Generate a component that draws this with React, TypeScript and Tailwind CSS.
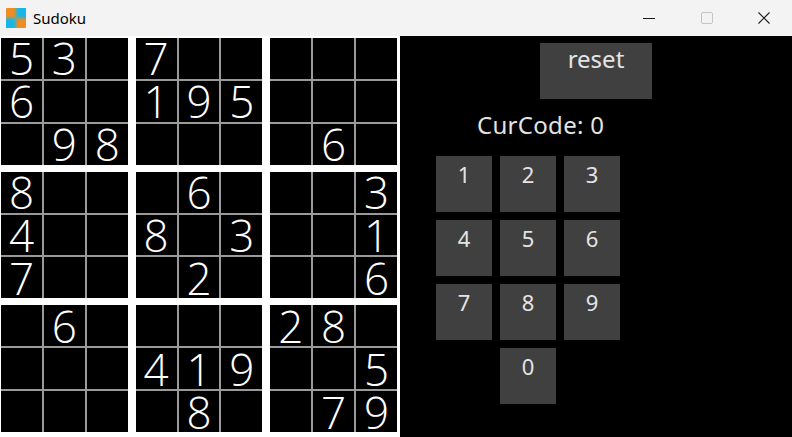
import React from "react";

const puzzle = [
  "53.7.....",
  "6..195...",
  ".98....6.",
  "8...6...3",
  "4..8.3..1",
  "7...2...6",
  ".6....28.",
  "...419..5",
  "....8..79",
];

function AppIcon() {
  return (
    <svg width="20" height="20" viewBox="0 0 20 20">
      <defs>
        <filter id="soft" x="-20%" y="-20%" width="140%" height="140%">
          <feGaussianBlur stdDeviation="1.6" />
        </filter>
        <clipPath id="clip">
          <rect x="0" y="0" width="20" height="20" rx="1" />
        </clipPath>
      </defs>
      <g clipPath="url(#clip)">
        <rect x="0" y="0" width="20" height="20" fill="#ef8d22" />
        <g filter="url(#soft)">
          <rect x="10" y="-4" width="14" height="14" fill="#19b6e8" />
          <rect x="-4" y="10" width="14" height="14" fill="#19b6e8" />
        </g>
      </g>
    </svg>
  );
}

function TitleBar() {
  return (
    <div className="flex h-[36px] items-center bg-[#f3f3f3] text-black">
      <div className="ml-[6px] flex items-center">
        <AppIcon />
      </div>
      <span className="ml-[7px] text-[15px] font-['Segoe_UI','Noto_Sans',sans-serif]">Sudoku</span>
      <div className="ml-auto flex h-full">
        <div className="flex w-[58px] items-center justify-center">
          <svg width="12" height="12" viewBox="0 0 12 12">
            <line x1="0" y1="6.5" x2="12" y2="6.5" stroke="#1a1a1a" strokeWidth="1" />
          </svg>
        </div>
        <div className="flex w-[58px] items-center justify-center">
          <svg width="12" height="12" viewBox="0 0 12 12">
            <rect x="0.5" y="0.5" width="11" height="11" rx="1.5" fill="none" stroke="#c4c4c4" strokeWidth="1" />
          </svg>
        </div>
        <div className="flex w-[56px] items-center justify-center">
          <svg width="12" height="12" viewBox="0 0 12 12">
            <path d="M0.5 0.5 L11.5 11.5 M11.5 0.5 L0.5 11.5" stroke="#1a1a1a" strokeWidth="1.1" />
          </svg>
        </div>
      </div>
    </div>
  );
}

function Board() {
  return (
    <div className="grid h-[401px] w-[400px] shrink-0 grid-cols-3 grid-rows-3 gap-x-[8px] gap-y-[7px] bg-white pb-[5px] pl-[1px] pr-[3px] pt-[2px]">
      {[0, 1, 2].map(br =>
        [0, 1, 2].map(bc => (
          <div key={`${br}-${bc}`} className="grid grid-cols-3 grid-rows-3 gap-[2px] bg-[#9a9a9a]">
            {[0, 1, 2].map(r =>
              [0, 1, 2].map(c => {
                const ch = puzzle[br * 3 + r][bc * 3 + c];
                return (
                  <div
                    key={`${r}-${c}`}
                    className="flex items-center justify-center bg-black font-['Open_Sans',sans-serif] text-[44px] font-light leading-[40px] text-white"
                  >
                    {ch === "." ? "" : ch}
                  </div>
                );
              })
            )}
          </div>
        ))
      )}
    </div>
  );
}

function KeyButton({ label }: { label: string }) {
  return (
    <div className="flex h-[56px] w-[56px] justify-center bg-[#404040] pt-[3px] text-[22px] leading-[30px] text-[#e4e4e4]">
      {label}
    </div>
  );
}

function Panel() {
  return (
    <div className="flex flex-1 flex-col bg-black">
      <div className="mt-[7px] flex h-[56px] w-[112px] justify-center self-center bg-[#404040] pt-[1px] text-[24px] leading-[30px] text-[#e4e4e4]">
        reset
      </div>
      <div className="ml-[77px] mt-[10px] text-[24px] leading-[31px] tracking-[0.3px] text-[#e4e4e4]">CurCode: 0</div>
      <div className="ml-[36px] mt-[16px] grid w-[184px] grid-cols-3 gap-x-[8px] gap-y-[8px]">
        {["1", "2", "3", "4", "5", "6", "7", "8", "9"].map(n => (
          <KeyButton key={n} label={n} />
        ))}
        <div />
        <KeyButton label="0" />
      </div>
    </div>
  );
}

export default function App() {
  return (
    <div className="flex h-[437px] w-[792px] flex-col overflow-hidden bg-black font-['Noto_Sans',sans-serif]">
      <TitleBar />
      <div className="flex flex-1">
        <Board />
        <Panel />
      </div>
    </div>
  );
}
